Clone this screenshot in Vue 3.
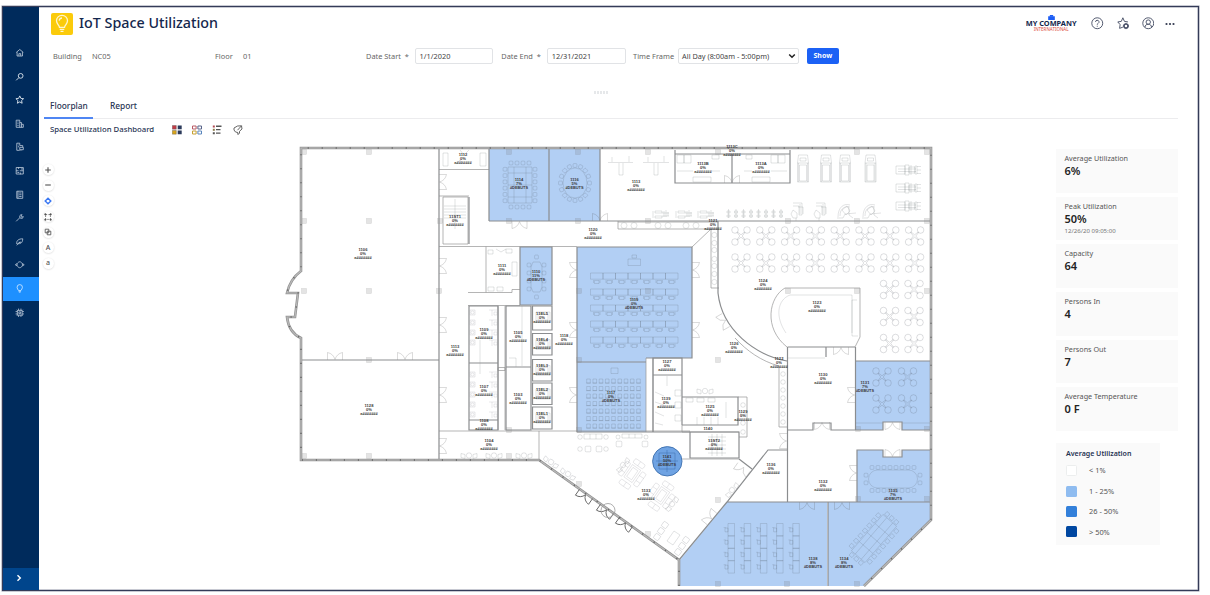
<script setup>
const nav = [
  ['M2 7.500 8 2.500l6 5M3.500 7v6.500h9V7M6.500 13V9.500h3V13'],
  ['M9.500 2.500a4 4 0 1 1 0 8 4 4 0 0 1 0-8M6.500 9.500 2 14'],
  ['M8 1.500l1.900 4.200 4.600.5-3.400 3.100.9 4.600L8 11.600 4 13.900l.9-4.600L1.500 6.200 6.100 5.700z'],
  ['M2 14V2h6v12M8 6h3v8M11 9h3v5H2M4 5h2M4 8h2M4 11h2'],
  ['M3 14V2h5v4h5v3M3 14h5M5 5h1M5 8h2M8 9h6v4H8zM10 13v1.500'],
  ['M2 2.500h12v11H2zM2 8h4M8 8h6M6 2v3M9 11v3M10 5h4M4 11h3'],
  ['M3 2h10v12H3zM5 2v12M7 5h4M7 8h4M7 11h4'],
  ['M2 14l6-6M8 8c-1-3 1-6 4-5l-2 2 1 2 3-1c0 3-3 4-6 2'],
  ['M3 12c-1-6 3-9 10-9 0 7-4 9-9 8M3 14l6-6M6 9l4 0'],
  ['M.5 8l3-2v4zM15.500 8l-3-2v4zM4 6c2-4 6-4 8 0M4 10c2 4 6 4 8 0'],
  ['M6 11C5 9 3.500 8 3.500 5.500a4.500 4.500 0 0 1 9 0C12.500 8 11 9 10 11zM6 13h4M7 15h2'],
  ['M4 4h8v8H4zM6.500 6.500h3v3h-3zM6 1v3M10 1v3M6 12v3M10 12v3M1 6h3M1 10h3M12 6h3M12 10h3M3 3l1 1M13 3l-1 1M3 13l1-1M13 13l-1-1'],
]
const cards = [
  { t: 'Average Utilization', v: '6%' },
  { t: 'Peak Utilization', v: '50%', s: '12/26/20 09:05:00' },
  { t: 'Capacity', v: '64' },
  { t: 'Persons In', v: '4' },
  { t: 'Persons Out', v: '7' },
  { t: 'Average Temperature', v: '0 F' },
]
const legend = [
  ['l0', '< 1%'], ['l1', '1 - 25%'], ['l2', '26 - 50%'], ['l3', '> 50%'],
]
const A = 'a#######'
const B = '#DEBUTS'
const labels = [
  [363, 253, '1106', '0%', A], [463, 158, '1112', '0%', A], [519, 183, '1114', '7%', B], [574.5, 183, '1116', '5%', B],
  [455, 220, '11ST1', '0%', A], [502, 269, '1111', '0%', A], [536, 275, '1110', '11%', B], [369, 409, '1128', '0%', A],
  [455, 350.500, '1113', '0%', A], [484, 333.500, '1109', '0%', A], [484, 390.500, '1107', '0%', A], [484, 424, '1108', '0%', A],
  [518, 336, '1105', '0%', A], [518, 398, '1103', '0%', A], [542, 317.500, '11EL5', '0%', A], [542, 343.500, '11EL4', '0%', A],
  [542, 369.500, '11EL3', '0%', A], [542, 393.500, '11EL2', '0%', A], [542, 417.500, '11EL1', '0%', A], [564, 339.500, '1118', '0%', A],
  [489, 444, '1104', '0%', A], [593, 233, '1120', '0%', A], [636, 185.500, '1113', '0%', A], [703, 167, '1113B', '0%', A],
  [761, 167, '1113A', '0%', A], [732, 150, '1113C', '0%', A], [713, 224.500, '1121', '0%', A], [763, 284.500, '1124', '0%', A],
  [817, 306.500, '1123', '0%', A], [634, 303.500, '1119', '0%', B], [611, 396, '1117', '0%', B], [667, 365.500, '1127', '0%', A],
  [666, 402.500, '1139', '0%', A], [710, 410, '1125', '0%', A], [743, 415.500, '1129', '0%', A], [714, 444, '11ST2', '0%', A],
  [646, 494.500, '1133', '0%', A], [667, 460, '1141', '50%', B], [734, 347.500, '1126', '0%', A], [779, 362.500, '1122', '0%', A],
  [823, 378.500, '1130', '0%', A], [865, 386.500, '1131', '7%', B], [771, 468.500, '1136', '0%', A], [823, 485.500, '1132', '0%', A],
  [893, 494, '1135', '7%', B], [813, 562, '1138', '8%', B], [844, 562, '1134', '8%', B],
]
const columns = [
  [304, 152], [369, 152], [304, 221], [369, 221], [440, 221], [304, 291], [369, 291], [439, 291], [369, 360], [304, 456], [369, 456],
  [509, 430], [509, 456], [509, 152], [509, 221], [578, 221], [578, 152], [579, 291], [648, 152], [648, 221], [648, 291], [718, 360],
  [718, 500], [648, 534], [718, 584], [718, 152], [788, 221], [857, 221], [857, 152], [927, 152], [927, 291], [857, 291], [788, 291],
  [787, 584], [857, 584], [579, 360], [579, 430], [579, 484], [927, 221], [858, 429], [927, 429], [927, 499], [858, 499],
]
const doors = [
  [519.500, 221, 0], [439, 182, -90], [439, 266, -90], [439, 325, -90], [439, 395, -90], [439, 446, -90],
  [577, 270, 90], [577, 330, 90], [577, 395, 90], [692, 270, -90], [692, 330, -90], [335, 360, 180], [405, 360, 180],
  [600, 221, 180], [732, 183, 180], [841, 347, 0], [855, 395, 90], [822, 422, 0], [892.500, 422, 0], [892.500, 457, 180],
  [787, 441, 90], [857, 473, 90], [807, 502, 0], [842, 502, 0], [726, 320, 60], [744, 467, 35], [712, 519, 130],
]
const outDoors = [[586, 494, 35], [626, 522, 35], [607, 509, 35]]
const tables = []
for (const y of [236, 263]) for (let i = 0; i < 8; i++) tables.push([741 + i * 24.800, y])
for (const y of [289.500, 316.500, 343.500]) for (const x of [889.500, 914]) tables.push([x, y])
for (const y of [377, 404]) for (const x of [882, 907.500]) tables.push([x, y])

const desks = []
for (let r = 0; r < 5; r++) for (let c = 0; c < 7; c++) desks.push([590.500 + c * 12.500, 273 + r * 16])
const seats = []
for (let r = 0; r < 7; r++) for (let c = 0; c < 9; c++) seats.push([588.500 + c * 6.250, 381 + r * 7.500])
const vdesks = []
for (let c = 0; c < 5; c++) for (let r = 0; r < 4; r++) vdesks.push([728 + c * 16.200, 523.500 + r * 12.400])

const ring = (cx, cy, rx, ry, n) => Array.from({ length: n }, (_, i) => {
  const a = (i / n) * Math.PI * 2
  return [cx + rx * Math.cos(a), cy + ry * Math.sin(a), (a * 180) / Math.PI + 90]
})
const box = (x0, y0, x1, y1, nx, ny) => {
  const out = []
  for (let i = 0; i < nx; i++) {
    const x = x0 + ((i + 1) * (x1 - x0)) / (nx + 1)
    out.push([x, y0, 0], [x, y1, 180])
  }
  for (let i = 0; i < ny; i++) {
    const y = y0 + ((i + 1) * (y1 - y0)) / (ny + 1)
    out.push([x0, y, -90], [x1, y, 90])
  }
  return out
}
const chairs = [
  ...box(505, 163, 535, 207, 4, 6),
  ...ring(575, 183, 14.500, 17.500, 16),
  ...box(529, 257, 544, 297, 1, 4),
  ...box(866, 467.500, 920, 490.500, 8, 2),
]
const slantChairs = box(-27, -12, 27, 12, 7, 3)
const mills = [803, 826, 845, 870.500]
const bikes = [[797, 210], [820, 210], [845, 211], [870, 211]]
const benches = [170, 188, 206]
const weights = Array.from({ length: 8 }, (_, i) => 728.500 + i * 7.500)
const lifts = [660, 683, 705]
const cups = [624, 634, 658, 668, 686, 696]
const sidecups = [235, 243, 250, 259, 266, 274, 282]
const lobby = [[469, 455.500, 0], [494, 455.500, 0], [524, 455.500, 0], [551, 462, 35], [568, 474, 35], [705, 391, 0], [732, 490, -50], [623, 465, -50], [672, 504, -50]]
const lounge = [[632, 474, 35], [661, 496, 35]]
const singles = [[588, 449, 0], [599, 449, 0], [619, 444, 0], [645, 444, 0], [657, 537, 35], [661, 531, 35], [665, 525, 35], [678, 552, 35], [682, 546, 35], [686, 540, 35]]
const elevators = [[306, 25], [333.500, 22.500], [359.500, 22.500], [383, 22.500], [407, 23]]
const fixtures = [310, 320, 330, 340, 372, 382, 392, 402, 412]
</script>

<template>
  <div class="page">
    <div class="frame">
      <nav class="side">
        <div v-for="(n, i) in nav" :key="i" class="nav-item" :class="{ active: i === 10 }">
          <svg viewBox="0 0 16 16"><path :d="n[0]" /></svg>
        </div>
        <div class="expand"><svg viewBox="0 0 8 8"><path d="M2.500 1.200 5.300 4 2.500 6.800" /></svg></div>
      </nav>

      <main class="main">
        <header class="head">
          <span class="logo"><svg viewBox="0 0 22 22"><path d="M8.500 14.300C8 11.800 5.500 10.800 5.500 7.800a5.500 5.500 0 0 1 11 0c0 3-2.500 4-3 6.500zM8.700 16.300h4.600M9.500 18.300h3M8.200 7.600A3 3 0 0 1 11 5" /></svg></span>
          <h1>IoT Space Utilization</h1>
          <div class="brand">
            <svg class="cube" viewBox="0 0 8 6"><path d="M0 1.500h8V6H0z" /><path d="M2 0h4v2H2z" /></svg>
            <b>MY COMPANY</b><i>INTERNATIONAL</i>
          </div>
          <svg class="hi" viewBox="0 0 16 16"><circle cx="8" cy="8" r="7" /><path d="M5.800 6.300a2.200 2.200 0 1 1 3.200 2c-.8.400-1 .8-1 1.500M8 11.200v1.200" /></svg>
          <svg class="hi" viewBox="0 0 16 16"><path d="M7.500 13 3.300 14.500 4 9.800 1 6.300l4.500-.7L7.500 1l2 4.600 4.500.7" /><circle cx="11.500" cy="11.500" r="2.600" stroke-width="2" /><path d="M11.500 7.500v1.500M11.500 14v1.500M7.500 11.500H9M14 11.500h1.500" /></svg>
          <svg class="hi" viewBox="0 0 16 16"><circle cx="8" cy="8" r="7" /><circle cx="8" cy="6.500" r="2.800" /><path d="M3.800 13c.2-2.500 1.700-3.700 4.200-3.700s4 1.200 4.200 3.700" /></svg>
          <svg class="dots" viewBox="0 0 10 4"><circle cx="1.500" cy="2" r="1.100" /><circle cx="5" cy="2" r="1.100" /><circle cx="8.500" cy="2" r="1.100" /></svg>
        </header>

        <section class="filters">
          <span class="f-b">Building</span><span class="f-nc">NC05</span>
          <span class="f-fl">Floor</span><span class="f-01">01</span>
          <span class="f-ds">Date Start&nbsp; *</span><span class="inp w1">1/1/2020</span>
          <span class="f-de">Date End&nbsp; *</span><span class="inp w1">12/31/2021</span>
          <span class="f-tf">Time Frame</span>
          <span class="inp sel">All Day (8:00am - 5:00pm)<svg viewBox="0 0 8 6"><path d="M1.200 1.500 4 4.300 6.800 1.500" /></svg></span>
          <span class="show">Show</span>
        </section>
        <div class="grip"><i v-for="n in 5" :key="n"></i></div>

        <div class="tabs"><span class="tab on">Floorplan</span><span class="tab">Report</span></div>

        <div class="bar">
          <span class="bt">Space Utilization Dashboard</span>
          <svg class="bi" viewBox="0 0 10 10"><path fill="#c33c46" d="M.3.500h4v3.700h-4z" /><path fill="#2b3a5b" d="M5.700.5h4v3.700h-4zM5.700 5.500h4v3.700h-4z" /><path fill="#d9a51c" d="M.3 5.500h4v3.700h-4z" /><path d="M.3.500h4v3.700h-4zM.3 5.500h4v3.700h-4z" fill="none" stroke="#555" stroke-width=".4" /></svg>
          <svg class="bi" viewBox="0 0 10 10" fill="none" stroke-width="1"><path stroke="#b85a64" d="M.5 1h3.600v3H.5z" /><path stroke="#59658a" d="M5.900 1h3.600v3H5.900z" /><path stroke="#c7a030" d="M.5 6h3.600v3H.5z" /><path stroke="#5a86bd" d="M5.900 6h3.600v3H5.900z" /></svg>
          <svg class="bi" viewBox="0 0 10 10"><path fill="#b04a52" d="M.8.500h2v2h-2z" /><path fill="#8a7a4a" d="M.8 3.800h2v2h-2z" /><path fill="#555" d="M.8 7.200h2v2h-2zM4 .6h5.500v1.300H4zM4 4h4.500v1.300H4zM4 7.500h4.500v1.300H4z" /></svg>
          <svg class="bi" viewBox="0 0 10 10" fill="none" stroke="#555" stroke-width=".9"><path d="M4.500 1 8.500.8 9 4 6.500 6.300V8.300L4.800 9.500V7.500L2.500 7 1 5V3zM8.500.8 4.500 5.200" /></svg>
        </div>

        <div class="body">
          <div class="tools">
            <span><svg viewBox="0 0 10 10"><path d="M5 1.500v7M1.500 5h7" stroke-width="1.400" /></svg></span>
            <span><svg viewBox="0 0 10 10"><path d="M1.500 5h7" stroke-width="1.400" /></svg></span>
            <span><svg class="blue" viewBox="0 0 10 10"><path d="M5 1.500 8.500 5 5 8.500 1.500 5z" stroke-width="1.800" /></svg></span>
            <span><svg viewBox="0 0 10 10"><path d="M2 2h6v6H2z" stroke-dasharray="2 1.500" /><path d="M1 1h1.500v1.500H1zM7.500 1H9v1.500H7.500zM1 7.500h1.500V9H1zM7.500 7.500H9V9H7.500z" fill="#555" /></svg></span>
            <span><svg viewBox="0 0 10 10"><path d="M1.500 1.500h4.500v4.500h-4.500zM4 4h4.500v4.500H4z" stroke-width="1.100" /></svg></span>
            <span>A</span>
            <span>a</span>
          </div>

          <svg class="plan" viewBox="270 142 680 444.500">
            <!-- occupied rooms -->
            <g class="room">
              <path d="M489 149h60v72h-60zM549 149h51v72h-51zM520 247h32v58h-32zM577 247h115v111h-46v4h-69zM577 362h69v70h-69z" />
              <path d="M856 361h74v69h-28v-8h-19v8h-27zM857 450h26v7h19v-7h28v52h-73zM727 502h100v84H680v-26zM828 502h102v18l-66 66h-36z" />
            </g>

            <g class="col"><rect v-for="(c, i) in columns" :key="i" :x="c[0] - 2.500" :y="c[1] - 2.500" width="5" height="5" /></g>

            <!-- furniture -->
            <g class="fur">
              <g v-for="(t, i) in tables" :key="'t' + i" class="tb" :transform="`translate(${t[0]} ${t[1]})`">
                <path d="M-3.800-4.200 0-1.200 3.800-4.200M-3.800 4.200 0 1.200 3.800 4.200M-4.200-3.800-1.200 0-4.200 3.800M4.200-3.800 1.200 0 4.200 3.800" />
                <circle cx="-6" cy="-6" r="3.300" /><circle cx="6" cy="-6" r="3.300" /><circle cx="-6" cy="6" r="3.300" /><circle cx="6" cy="6" r="3.300" />
              </g>
              <g v-for="(c, i) in mills" :key="'m' + i" :transform="`translate(${c} 155)`">
                <path d="M-4.500 0h9l1 8v19h-11V8zM-3.500 10h7v16h-7zM-5.500 8h11M-3 3h6v3h-6zM-4.500 8v19M4.500 8v19" />
              </g>
              <g v-for="(b, i) in bikes" :key="'b' + i" :transform="`translate(${b[0]} ${b[1]})`">
                <path v-if="i < 2" d="M-4-7h9v12h-3v-9h-6M-4 0l4 3v5h-4l-2-4zM1-3h5v7M-1 8v3M3-6v10" />
                <path v-else d="M-7 6c0-10 6-14 12-12M-3-1l5-4 3 5-4 4zM-8 7h6l2-4 11-1M4-5v9l4 3M-5 5c0-7 4-10 9-9" />
              </g>
              <g v-for="y in benches" :key="'n' + y" :transform="`translate(895 ${y})`">
                <path d="M1-4h9v8H1zM10-5h4V5h-4zM14-3h6v6h-6zM20-4h2v8h-2zM3-1h18M3 1.500h18M22-3.500h4M22 3.500h4M22 0h4M16-5v10" />
              </g>
              <path v-for="x in weights" :key="'w' + x" :d="`M${x} 209v9M${x - 1.500} 211h3v2h-3zM${x - 1.500} 215h3v2h-3z`" />
              <g v-for="x in lifts" :key="'l' + x" :transform="`translate(${x} 214)`">
                <path d="M-7-3v7M-5-3h7v2h-7zM-5 2h7v2h-7zM2-1h7M2 2h7M4-3v6M6-4v7M8-2v4" />
              </g>
              <path d="M608 162.500h25M612 157v5M629 156v6M619 163v12h4v-12M643 162.500h26M648 157v5M664 156v6M654 163v12h4v-12" />
              <circle v-for="x in cups" :key="'c' + x" :cx="x" cy="225.500" r="3" />
              <circle v-for="y in sidecups" :key="'sc' + y" cx="714.300" :cy="y" r="2.600" />
              <circle v-for="n in 7" :key="'kc' + n" cx="783" :cy="366 + n * 8" r="2.300" />
              <circle v-for="n in 4" :key="'vc' + n" cx="743" :cy="396 + n * 9" r="2.300" />

              <g v-for="(d, i) in desks" :key="'d' + i" :transform="`translate(${d[0]} ${d[1]})`">
                <path d="M0 0h12.500v6.200H0zM4 7.500h4.500v3H4zM3 7v3M9.500 7v3" />
              </g>
              <path d="M628 259h12.500v6.500H628zM632 255h4.500v3H632zM611 368h7v5.500h-7z" />
              <path v-for="(s, i) in seats" :key="'s' + i" :d="`M${s[0] - 1.800} ${s[1] - 2}h3.600v4h-3.600zM${s[0] - 2.300} ${s[1] + 2.200}h4.600`" />
              <g v-for="(d, i) in vdesks" :key="'v' + i" :transform="`translate(${d[0]} ${d[1]})`">
                <path d="M0 0h6.500v12.400H0zM-3 4.500h3v3.800h-3zM-4.300 4h2" />
              </g>

              <rect v-for="(c, i) in chairs" :key="'h' + i" x="-1.900" y="-1.900" width="3.800" height="3.800" rx=".8" :transform="`translate(${c[0]} ${c[1]}) rotate(${c[2]})`" />
              <path d="M508 167h24v36h-24zM514 167v36M526 167v36M508 173h24M508 197h24M508 185h24" />
              <ellipse cx="575" cy="183" rx="12" ry="15" />
              <path d="M533 262h7l2 5v20l-2 5h-7l-2-5v-20z" />
              <rect x="868.500" y="470" width="49" height="18" rx="9" />
              <g transform="translate(874 538.500) rotate(-49)">
                <path d="M-24-9h48V9h-48zM-24-4h48M-24 4h48M-12-9V9M0-9V9M12-9V9" />
                <rect v-for="(c, i) in slantChairs" :key="'sl' + i" :x="c[0] - 1.900" :y="c[1] - 1.900" width="3.800" height="3.800" />
              </g>

              <g v-for="(l, i) in lobby" :key="'lb' + i" :transform="`translate(${l[0]} ${l[1]}) rotate(${l[2]})`">
                <circle r="2.700" /><path d="M-8-2l4 1v4l-4-1zM4-1l4-1v4l-4 1z" />
              </g>
              <g v-for="(l, i) in lounge" :key="'lo' + i" class="soft" :transform="`translate(${l[0]} ${l[1]}) rotate(${l[2]})`">
                <rect x="-5" y="-8" width="10" height="15" /><rect x="-3" y="-6" width="6" height="11" />
                <rect x="-12" y="-8" width="5" height="16" rx="1.500" /><rect x="7" y="-8" width="5" height="16" rx="1.500" /><rect x="-6" y="-15" width="12" height="5" rx="1.500" /><rect x="-6" y="10" width="12" height="5" rx="1.500" />
                <path d="M-12-3h5M-12 3h5M7-3h5M7 3h5M0-15v5M0 10v5" />
              </g>
              <rect v-for="(s, i) in singles" :key="'sg' + i" x="-2.800" y="-2.800" width="5.600" height="5.600" rx="1" :transform="`translate(${s[0]} ${s[1]}) rotate(${s[2]})`" />
              <path d="M584 434h18v5h-18zM590 434v5M596 434v5M622 434h20v4h-20zM629 434v4M635 434v4M667 541l7-10 6 4-7 10z" />
              <circle cx="580" cy="437" r="2.300" /><circle cx="606" cy="437" r="2.300" /><circle cx="580" cy="449" r="2.300" /><circle cx="606" cy="449" r="2.300" /><circle cx="618" cy="437" r="2" /><circle cx="646" cy="437" r="2" />

              <!-- stairs, lifts and washrooms -->
              <path d="M444 206h22M444 209h22M444 212h22M444 215h22M444 218h22M455 199v30M708 437h18M708 441h18M708 445h18M708 449h18M708 453h18M712 434v22M717 434v22M722 434v22" />
              <path v-for="(e, i) in elevators" :key="'e' + i" :d="`M536 ${e[0] + 6}h14v10h-14zM538 ${e[0] + 8}h10v6h-10z`" />
              <g v-for="y in fixtures" :key="'fx' + y" class="soft"><path :d="`M470 ${y}h5v5h-5zM489 ${y}h8M492 ${y}v6M494 ${y + 2}h3v3h-3z`" /><circle cx="472.500" :cy="y + 2.500" r="1.600" /></g>
              <path d="M443 153h5v13h-5zM480 153h6v13h-6zM460 150l4 5 5-5M456 164l4-4 4 4M512 262h5v14h-5zM488 250h5v4h-5zM496 249l5 3 5-3M488 287h6v4h-6zM497 287h6v4h-6zM506 249h6v4h-6zM480 340v34M509 358h7v9M522 306v60" />
              <path d="M677 155h7v8h-7zM684 155h7v8h-7zM712 155h7v4h-7zM746 155h6v4h-6zM771 155h7v8h-7zM778 155h7v8h-7zM693 177h18v5h-18zM752 177h18v5h-18zM677 171h16M712 171h8M744 171h8M771 171h16" />
              <path d="M667 376v10M655 392l9 4M655 402l9 3M655 412l9 4M655 423l8 2M675 390h6v6h-6zM675 402h6v6h-6zM675 415h6v6h-6zM686 398h7v4h-7zM697 398h7v4h-7zM708 398h7v4h-7zM697 425v-8M704 425v-8M711 425v-8M718 425v-8M726 402v16" />
              <path d="M790 295h62v38M790 295c-13 5-15 22-4 38M857 300h-5v36h6M787 358h38M856 423h27M902 423h28" />
            </g>

            <g class="door">
              <path v-for="(d, i) in doors" :key="'o' + i" d="M-7.500 0v7.500a10 10 0 0 0 7.500-7M7.500 0v7.500a10 10 0 0 1-7.500-7" :transform="`translate(${d[0]} ${d[1]}) rotate(${d[2]})`" />
            </g>

            <!-- thin walls -->
            <g class="thin">
              <path d="M439 169.500h50M439 196h30M443 197h25v47h-25zM439 246.500h138M486 246.500v46M468 292.500h44v-3h8M468 305.500h52M439 431h251M539 431v29M618 221v8h100M618 222h100M711 229v59h8M692 247l19-18M646 358v74M653 358v74M682 425v7M738 397h9v40h-8M682 432h57M682 459h57" />
              <path d="M735 338c12 13 26 23 44 28v61h8M785 288h75v49l-5 10M785 288c-16 9-22 40 2 59M498 306v124M505 306v124M498 367.500h7v3h-7z" />
            </g>
            <!-- main interior walls -->
            <g class="wall">
              <path d="M439 148v312M301 360h138M489 149v72M549 149v72M600 149v72M489 221h442M577 247h115v111h-46M577 247v185M577 362h69M577 432h113M520 247h32v58h-32z" />
              <path d="M469 306h29v57h-29zM469 363h29v57h-29zM469 420h29v10h-29zM506 306h25v61h-25zM506 367h25v63h-25zM469 197v47M653 358h29v17h-29zM682 375v50M653 375v57M682 397h56v28h-56M675 150v33h115v-33M732 154v29M675 154h115M690 432h49v26h-49z" />
              <path v-for="(e, i) in elevators" :key="'ew' + i" :d="`M532.500 ${e[0]}h19.500v${e[1] - 1}h-19.500z`" />
              <path d="M718 221v72c4 37 37 62 69 68M787.500 347H855M787.500 347v155M855.500 347v83M826 347v10M787 430h26v-7h18v7h52v-8h19v8h28M856 361h75M857 502v-52h26v7h19v-7h29M727 502h204M828 502v84M679 560l48-58 41-52h20M739 459l13 10" />
            </g>
            <!-- outer shell -->
            <g>
              <path v-for="k in ['o1', 'o2', 'o3']" :key="k" :class="k" d="M679 586v-26L539 460H301V338c-9-4-13-12-14-21h8l3-24h-11c2-9 6-16 14-22V148h630v372l-67 66" />
            </g>
            <g class="out">
              <path v-for="(d, i) in outDoors" :key="'x' + i" d="M-8 0v7a9 9 0 0 0 8-6M8 0v7a9 9 0 0 1-8-6" :transform="`translate(${d[0]} ${d[1]}) rotate(${d[2]})`" />
              <circle cx="608" cy="510.500" r="7" class="rev" />
            </g>

            <circle cx="667.300" cy="461.300" r="14.700" class="hot" />
            <path d="M659 453h16v16h-16zM656 461h22M667 450v22" class="hotf" />

            <g class="lab">
              <g v-for="(l, i) in labels" :key="'L' + i">
                <text :x="l[0]" :y="l[1] - 2.400">{{ l[2] }}</text>
                <text :x="l[0]" :y="l[1] + 1.600">{{ l[3] }}</text>
                <text class="id" :x="l[0]" :y="l[1] + 5.800">{{ l[4] }}</text>
              </g>
              <text x="708" y="429.500">1140</text>
            </g>
          </svg>

          <aside class="panel">
            <div v-for="c in cards" :key="c.t" class="card">
              <span class="ct">{{ c.t }}</span><b>{{ c.v }}</b><small v-if="c.s">{{ c.s }}</small>
            </div>
            <div class="legend">
              <b>Average Utilization</b>
              <div v-for="l in legend" :key="l[0]" class="lr"><i :class="l[0]"></i><span>{{ l[1] }}</span></div>
            </div>
          </aside>
        </div>
      </main>
    </div>
  </div>
</template>

<style>
body { background: #fff; overflow: hidden; }
</style>
<style scoped>
* { box-sizing: border-box; }
.page { width: 1210px; height: 595px; padding: 6px 0 0 2px; font-family: "Noto Sans", "Open Sans", sans-serif; color: #555; font-size: 7.4px; line-height: 1.2; }
.frame { width: 1197px; height: 585px; border: 1px solid #343b58; box-shadow: 0 0 0 .5px #9094a6, inset 0 0 0 .5px #9094a6; display: flex; }
.side { width: 36px; background: #002b5c; padding-top: 34px; display: flex; flex-direction: column; flex: none; }
.nav-item { height: 23.600px; display: flex; align-items: center; justify-content: center; padding-right: 2px; flex: none; }
.nav-item svg { width: 9.500px; height: 9.500px; fill: none; stroke: #b9c7d8; stroke-width: 1.400; }
.nav-item:nth-child(-n+3) svg { stroke: #dfe7ef; stroke-width: 1.500; }
.nav-item:first-child svg { stroke-width: 1.200; }
.nav-item.active { background: #1e90ff; }
.nav-item.active svg { stroke: #d4e9ff; }
.expand { margin-top: auto; height: 22.500px; background: #00458c; display: flex; align-items: center; justify-content: center; padding: 0 4px 1.500px 0; }
.expand svg { width: 8px; height: 8px; fill: none; stroke: #fff; stroke-width: 1.400; }
.main { flex: 1; display: flex; flex-direction: column; min-width: 0; }
.head { height: 33px; display: flex; align-items: center; padding: 0 23px 0 12px; flex: none; }
.logo { width: 22px; height: 22px; border-radius: 2px; background: #fbcb0b; margin-right: 6px; }
.logo svg { display: block; fill: none; stroke: #fff6cf; stroke-width: 1.300; }
h1 { margin: -1.500px 0 0; font-size: 14.300px; font-weight: 500; color: #14274d; white-space: nowrap; }
.brand { margin-left: auto; width: 52px; margin-right: 14px; display: flex; flex-direction: column; align-items: center; height: 18px; line-height: 1; }
.brand b { font-size: 7.400px; color: #14274d; white-space: nowrap; line-height: 7px; }
.brand i { font-style: normal; font-size: 4.500px; color: #dc4b41; line-height: 5px; }
.cube { width: 7px; height: 5px; fill: #1d5df5; }
.hi { width: 12.500px; height: 12.500px; margin-right: 12.900px; fill: none; stroke: #4a5168; stroke-width: 1.200; }
.dots { width: 10px; height: 4px; margin-left: -2.300px; fill: #333a50; }
.filters { height: 32px; display: flex; align-items: center; padding-left: 14px; white-space: nowrap; flex: none; color: #666; }
.f-b { width: 39px; }
.f-nc { width: 123px; }
.f-fl { width: 28px; }
.f-01 { width: 123px; }
.f-ds { width: 49px; }
.f-de { width: 46px; margin-left: 8px; }
.f-tf { width: 44.500px; margin-left: 7.500px; }
.inp { height: 15.500px; border: 1px solid #e1e3e6; border-radius: 2px; padding-left: 3.500px; display: flex; align-items: center; justify-content: space-between; color: #444; }
.w1 { width: 78.300px; }
.sel { width: 121.500px; padding-right: 2px; font-size: 7.300px; }
.sel svg { width: 8px; height: 6px; fill: none; stroke: #222; stroke-width: 1.500; }
.show { margin-left: 7.500px; width: 32.500px; height: 15.500px; border-radius: 2px; background: #1c61f5; color: #fff; font-weight: 700; font-size: 7px; display: flex; align-items: center; justify-content: center; }
.grip { height: 21.500px; display: flex; gap: 1px; justify-content: center; align-items: flex-end; padding-right: 36px; flex: none; }
.grip i { width: 2px; height: 3px; background: #e6e8ea; }
.tabs { height: 25px; margin: 0 20px 0 5px; border-bottom: 1px solid #ececee; display: flex; font-weight: 500; font-size: 8.350px; color: #273453; flex: none; }
.tab { height: 25px; line-height: 24.500px; margin-left: 11px; padding: 0 6px; }
.tab.on { margin-left: 0; width: 49px; border-bottom: 2px solid #4f86f3; }
.bar { height: 22.500px; display: flex; align-items: center; padding-left: 11px; flex: none; margin-bottom: 1px; }
.bt { font-size: 7.750px; font-weight: 500; color: #273453; width: 122px; white-space: nowrap; }
.bi { width: 10px; height: 10px; margin-right: 10.200px; flex: none; }
.body { display: flex; flex: 1; min-height: 0; }
.tools { width: 231px; padding: 22px 0 0 3.500px; display: flex; flex-direction: column; gap: 4.700px; flex: none; }
.tools span { width: 11px; height: 11px; border-radius: 50%; box-shadow: 0 .5px 2px rgba(0, 0, 0, .16); display: flex; align-items: center; justify-content: center; font-size: 7px; color: #555; font-weight: 500; }
.tools svg { width: 8px; height: 8px; fill: none; stroke: #555; stroke-width: .9; }
.tools svg.blue { stroke: #3b78f2; }
.plan { width: 680px; height: 444.500px; flex: none; }
.panel { margin-left: 106px; width: 122px; padding-top: 7px; display: flex; flex-direction: column; flex: none; }
.card { height: 43.700px; margin-bottom: 4px; background: #fafafa; padding: 5px 0 0 8.500px; display: flex; flex-direction: column; flex: none; white-space: nowrap; }
.ct { font-size: 7.200px; line-height: 9px; color: #555; }
.card b { font-size: 11px; line-height: 15px; color: #222; font-weight: 600; }
.card small { font-size: 6.100px; line-height: 9px; color: #777; }
.legend { width: 104px; height: 102px; background: #fafafa; margin-top: 7.500px; padding: 5px 0 0 10px; }
.legend b { display: block; font-size: 7.050px; line-height: 10px; color: #273453; font-weight: 600; margin-bottom: 3px; }
.lr { height: 20.400px; display: flex; align-items: center; }
.lr i { width: 11px; height: 11px; border-radius: 1.500px; margin-right: 12px; }
.l0 { background: #fff; border: 1px solid #eceeee; }
.l1 { background: #8fbcf0; }
.l2 { background: #3380da; }
.l3 { background: #0047a1; }

.room path { fill: #b2cff4; }
.col rect { fill: rgba(120, 120, 120, .2); stroke: rgba(110, 110, 110, .25); stroke-width: .5; }
.fur { fill: none; stroke: rgba(70, 75, 85, .3); stroke-width: .52; }
.tb { stroke: rgba(70, 75, 85, .34); stroke-width: .55; }
.soft { stroke: rgba(70, 75, 85, .24); }
.door { fill: none; stroke: rgba(80, 80, 80, .42); stroke-width: .5; }
.thin { fill: none; stroke: #959595; stroke-width: .7; }
.wall { fill: none; stroke: #8b8d8f; stroke-width: 1.200; }
.o1 { fill: none; stroke: #929292; stroke-width: 2.600; }
.o2 { fill: none; stroke: #b9b9b9; stroke-width: 1.200; }
.o3 { fill: none; stroke: #666; stroke-width: 1.500; stroke-dasharray: 1.200 12.800; }
.out { fill: none; stroke: #555; stroke-width: .8; }
.rev { stroke: #999; }
.hot { fill: #6fa3e3; stroke: #3d6fae; stroke-width: .9; }
.hotf { fill: none; stroke: #3f6da8; stroke-width: .5; }
.lab text { font-family: "Liberation Sans", sans-serif; font-size: 4.100px; font-weight: 700; text-anchor: middle; fill: #3a3a3a; }
.lab text.id { font-size: 3.900px; }
</style>
